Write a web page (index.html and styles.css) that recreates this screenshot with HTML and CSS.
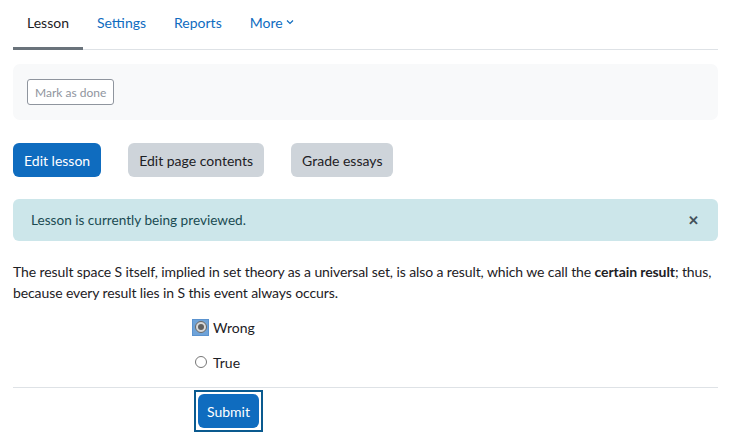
FILE: index.html
```html
<!DOCTYPE html>
<html>
<head>
<meta charset="utf-8">
<link rel="stylesheet" href="styles.css">
</head>
<body>
<nav class="tabs">
  <a class="tab active">Lesson</a>
  <a class="tab">Settings</a>
  <a class="tab">Reports</a>
  <a class="tab">More <svg class="chev" width="8" height="6" viewBox="0 0 8 6"><path d="M1 1.5 L4 4.5 L7 1.5" fill="none" stroke="#0f6cbf" stroke-width="1.2"/></svg></a>
</nav>
<div class="page">
  <div class="completion">
    <button class="btn-done">Mark as done</button>
  </div>
  <div class="actions">
    <button class="btn primary">Edit lesson</button>
    <button class="btn secondary">Edit page contents</button>
    <button class="btn secondary">Grade essays</button>
  </div>
  <div class="alert">
    <span>Lesson is currently being previewed.</span>
    <span class="close">&#x2715;</span>
  </div>
  <p class="question">The result space S itself, implied in set theory as a universal set, is also a result, which we call the <b>certain result</b>; thus, because every result lies in S this event always occurs.</p>
  <div class="options">
    <label class="opt"><span class="focus-box"><span class="radio"><span class="dot"></span></span></span>Wrong</label>
    <label class="opt"><span class="plain-box"><span class="radio"></span></span>True</label>
  </div>
  <hr class="sep">
  <div class="submit-row">
    <span class="submit-ring"><button class="btn primary submit">Submit</button></span>
  </div>
</div>
</body>
</html>
```
FILE: styles.css
```css
* { box-sizing: border-box; }
body {
  margin: 0;
  font-family: Lato, "Open Sans", sans-serif;
  font-size: 14px;
  color: #1d2125;
  background: #fff;
}
.tabs {
  display: flex;
  margin: 0 11px 0 13px;
  border-bottom: 1px solid #dee2e6;
  height: 50px;
}
.tab {
  display: flex;
  align-items: center;
  padding: 0 14px;
  color: #0f6cbf;
  border-bottom: 3px solid transparent;
  margin-bottom: -1px;
  padding-bottom: 2px;
}
.tab.active { color: #1d2125; border-bottom-color: #6a737b; }
.chev { margin-left: 3px; margin-top: -2px; }
.page { padding: 14px 11px 0 13px; }
.completion {
  background: #f8f9fa;
  border-radius: 7px;
  height: 56px;
  padding: 15px 14px;
}
.btn-done {
  font-family: inherit;
  font-size: 12px;
  color: #8f959e;
  background: #fff;
  border: 1px solid #8f959e;
  border-radius: 3px;
  height: 26px;
  padding: 0 7px;
}
.actions {
  display: flex;
  gap: 27px;
  margin-top: 23px;
}
.btn {
  font-family: inherit;
  font-size: 14px;
  height: 34px;
  padding: 0 11px;
  border: none;
  border-radius: 6px;
}
.primary { background: #0f6cbf; color: #fff; }
.secondary { background: #ced4da; color: #1d2125; }
.alert {
  margin-top: 22px;
  background: #cce6ea;
  color: #1a4b52;
  border-radius: 6px;
  height: 42px;
  display: flex;
  align-items: center;
  justify-content: space-between;
  padding: 0 19px 0 18px;
  font-size: 13.6px;
}
.close { color: #44515a; font-size: 13px; font-weight: bold; }
.question {
  margin: 20px 0 0;
  line-height: 21px;
  letter-spacing: -0.1px;
}
.options { padding-left: 180px; margin-top: 12px; }
.opt {
  display: flex;
  align-items: center;
  height: 24px;
  margin-bottom: 11px;
}
.focus-box, .plain-box {
  width: 15px; height: 15px;
  display: inline-flex;
  align-items: center;
  justify-content: center;
  margin-right: 5px;
}
.focus-box { background: #6fa3d8; outline: 1px solid #5b93cf; }
.radio {
  width: 12px; height: 12px;
  border: 1px solid #767676;
  border-radius: 50%;
  background: #fff;
  display: inline-flex;
  align-items: center;
  justify-content: center;
}
.focus-box .radio { border-color: #666; background: #d8d8d8; }
.dot { width: 6px; height: 6px; border-radius: 50%; background: #606060; }
.sep { border: none; border-top: 1px solid #dee2e6; margin: 13px 0 0; }
.submit-row { padding-left: 181px; padding-top: 2px; }
.submit-ring {
  display: inline-block;
  border: 2px solid #0a5a8f;
  padding: 2px;
}
.submit { height: 34px; padding: 0 9px; }
```
